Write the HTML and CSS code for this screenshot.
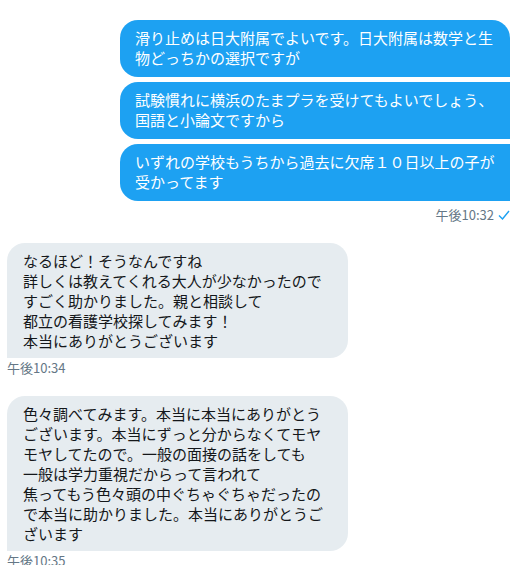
FILE: index.html
```html
<!DOCTYPE html>
<html lang="ja">
<head>
    <meta charset="UTF-8">
    <meta name="viewport" content="width=device-width, initial-scale=1.0">
    <title>メッセージ</title>
    <link rel="stylesheet" href="styles.css">
</head>
<body>
    <div class="thread">
        <div class="group sent">
            <div class="bubble first">滑り止めは日大附属でよいです。日大附属は数学と生<br>物どっちかの選択ですが</div>
            <div class="bubble middle">試験慣れに横浜のたまプラを受けてもよいでしょう、<br>国語と小論文ですから</div>
            <div class="bubble last">いずれの学校もうちから過去に欠席１０日以上の子が<br>受かってます</div>
            <div class="time">午後10:32
                <svg class="check" width="12" height="10" viewBox="0 0 12 10"><polyline points="1,5.5 4.5,9 11,1" fill="none" stroke="#1da1f2" stroke-width="1.4"/></svg>
            </div>
        </div>

        <div class="group received">
            <div class="bubble">なるほど！そうなんですね<br>詳しくは教えてくれる大人が少なかったので<br>すごく助かりました。親と相談して<br>都立の看護学校探してみます！<br>本当にありがとうございます</div>
            <div class="time">午後10:34</div>
        </div>

        <div class="group received">
            <div class="bubble">色々調べてみます。本当に本当にありがとうございます。本当にずっと分からなくてモヤモヤしてたので。一般の面接の話をしても<br>一般は学力重視だからって言われて<br>焦ってもう色々頭の中ぐちゃぐちゃだったので本当に助かりました。本当にありがとうございます</div>
            <div class="time">午後10:35</div>
        </div>
    </div>
</body>
</html>
```

FILE: styles.css
```css
body {
    margin: 0;
    background-color: #ffffff;
    font-family: "Noto Sans CJK JP", "Noto Sans", sans-serif;
    color: #14171a;
}
.thread {
    padding: 20px 9px 0 7px;
}
.group {
    display: flex;
    flex-direction: column;
    gap: 5px;
}
.sent {
    align-items: flex-end;
}
.received {
    align-items: flex-start;
    margin-top: 20px;
}
.bubble {
    box-sizing: border-box;
    font-size: 15px;
    line-height: 20px;
    padding: 8px 15px 9px;
    border-radius: 18px;
}
.sent .bubble {
    width: 390px;
    background-color: #1da1f2;
    color: #ffffff;
}
.sent .first {
    border-bottom-right-radius: 0;
}
.sent .middle,
.sent .last {
    border-top-right-radius: 0;
    border-bottom-right-radius: 0;
}
.received .bubble {
    width: 341px;
    padding: 8px 25px 7px 16px;
    background-color: #e6ecf0;
    border-bottom-left-radius: 0;
}
.time {
    display: flex;
    align-items: center;
    gap: 4px;
    font-size: 13px;
    line-height: 16px;
    color: #657786;
    margin-top: 1px;
}
.received .time {
    margin-top: -3px;
}
.check {
    display: block;
}
```
